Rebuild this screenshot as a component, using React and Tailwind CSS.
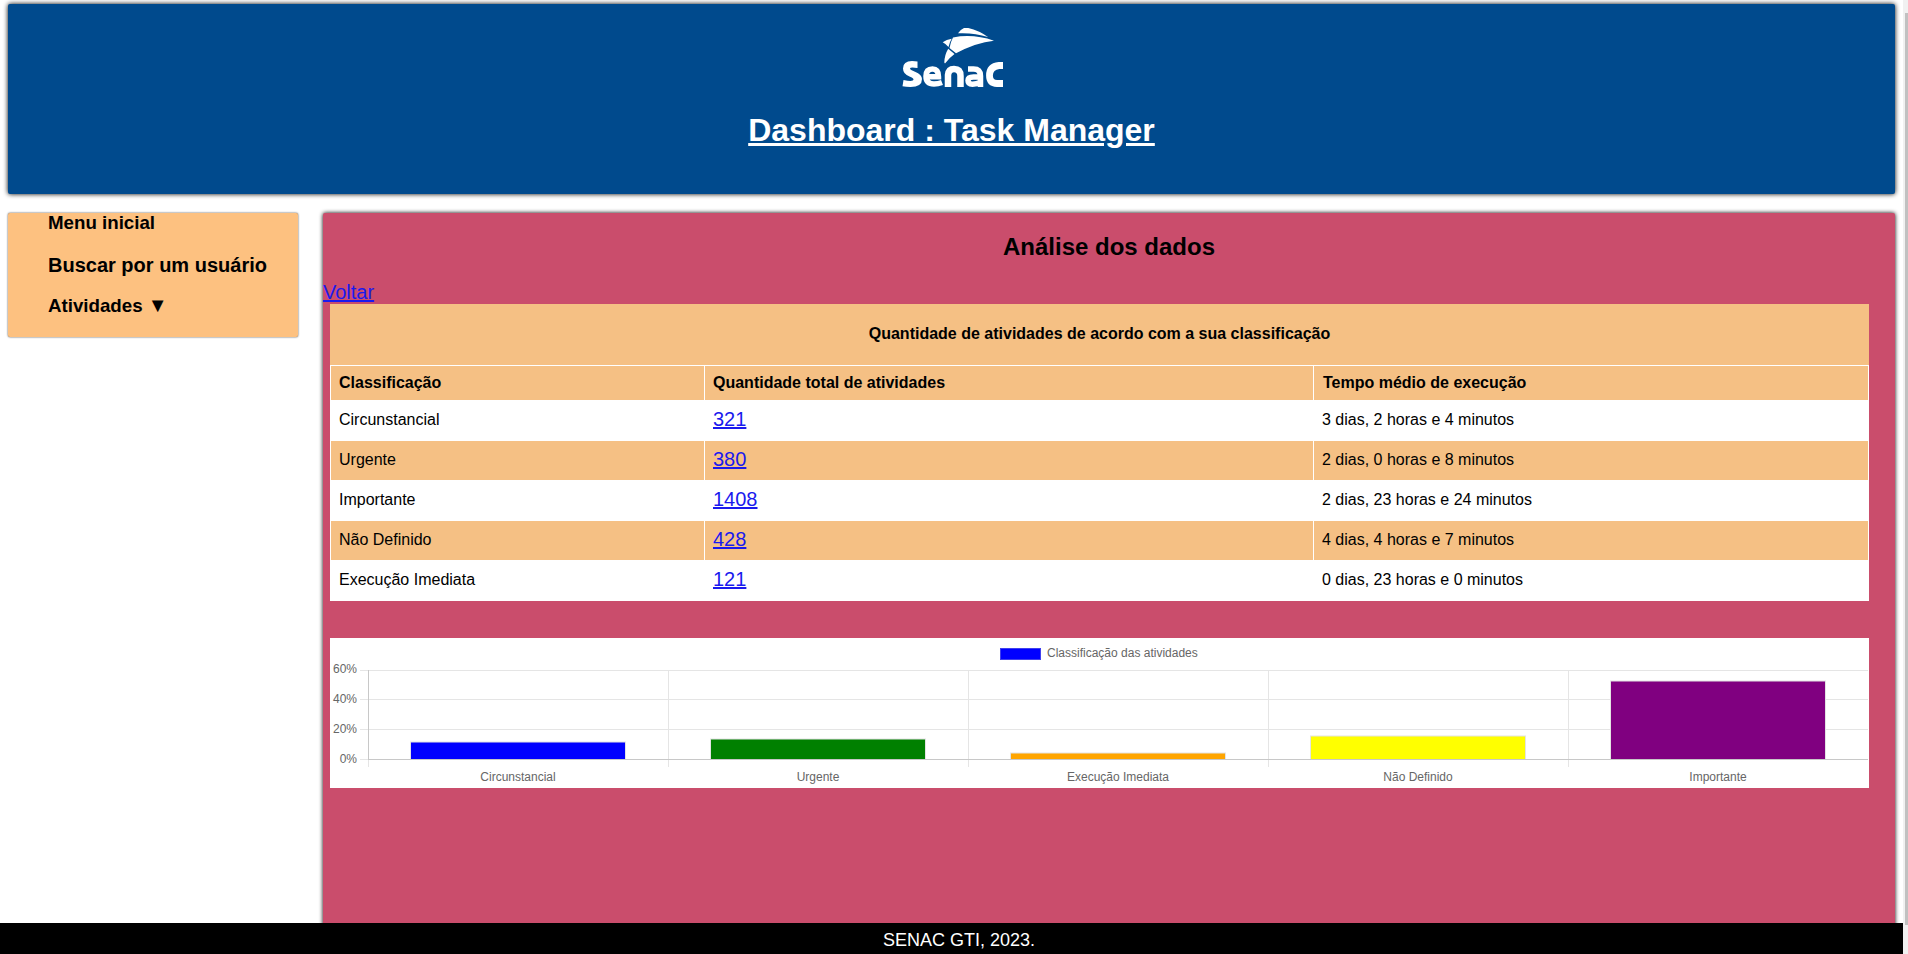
const rows = [
  ["Circunstancial", "321", "3 dias, 2 horas e 4 minutos"],
  ["Urgente", "380", "2 dias, 0 horas e 8 minutos"],
  ["Importante", "1408", "2 dias, 23 horas e 24 minutos"],
  ["Não Definido", "428", "4 dias, 4 horas e 7 minutos"],
  ["Execução Imediata", "121", "0 dias, 23 horas e 0 minutos"],
];

const bars = [
  { label: "Circunstancial", top: 104, fill: "#0000ff" },
  { label: "Urgente", top: 101, fill: "#008000" },
  { label: "Execução Imediata", top: 115, fill: "#ffa500" },
  { label: "Não Definido", top: 98, fill: "#ffff00" },
  { label: "Importante", top: 43, fill: "#800080" },
];

const ticks = [
  ["60%", 32.5],
  ["40%", 61.5],
  ["20%", 91.5],
];

function Logo() {
  return (
    <svg className="ml-[2px] block h-[61px] w-[101px]" viewBox="0 0 101 61" fill="#fff">
      <path d="M56 5.300 Q58.500 1.500 62 0 H66.300 Q77 2.500 86 9 Q72 4.500 56 5.300Z" />
      <path d="M51 9.500 Q71 5.500 92 12.700 Q74 14.500 54 25.300 L47.500 20 Q48.500 14 51 9.500Z" />
      <path d="M40.700 14.300 Q44.500 11.500 49.700 10.700 Q47.500 14 46.500 19 Q44 16 40.700 14.300Z" />
      <path d="M46.200 20.800 L52.500 26 Q47 30 43 35.500 L42.300 34.500 Q42.500 27 46.200 20.800Z" />
      <path d="M15.500 33.500 V40 Q8 38.800 8 40.500 Q8 42 13 43.700 Q20 46.500 20 51 Q20 59 8.500 59 Q4 59 0.500 58.300 L1.500 52 Q11.500 54 11.500 51.500 Q11.500 50 7.500 48.500 Q1 46 1 40.500 Q1 33 10 33 Q13 33 15.500 33.500Z" />
      <g fill="none" stroke="#fff">
        <path d="M24 48.800 H36.500 Q36.500 41 30.500 41 Q24 41 24 48.300 Q24 56 32 56 Q36 56 40 54.500" strokeWidth="5.500" />
        <path d="M46 59 V47 Q46.500 41 52 41 Q58.500 41 58.500 48 V59" strokeWidth="6.500" />
        <path d="M66 41 H71.500 Q78.500 41 78.500 48 V59 M78.500 49 H71.500 Q66 49 66 52.500 Q66 56.200 70.500 56.200 Q75 56.200 78.500 54" strokeWidth="5.500" />
        <path d="M101 37.500 H97 Q87.500 38.500 87.500 47.500 Q87.500 55.300 95 55.500 H101" strokeWidth="6.800" />
      </g>
    </svg>
  );
}

function Chart() {
  return (
    <svg
      className="mt-[37px] ml-[7px] block h-[150px] w-[1539px] bg-white"
      viewBox="0 0 1539 150"
      fontFamily="Liberation Sans, Arial, sans-serif"
      fontSize="12"
    >
      <rect x="670.500" y="10.500" width="40" height="11" fill="#0000ff" stroke="#4040ee" />
      <text x="717" y="19" fill="#666">Classificação das atividades</text>
      <g shapeRendering="crispEdges" stroke="#e5e5e5">
        {ticks.map(([t, y]) => (
          <line key={t} x1="30" x2="1538" y1={y} y2={y} />
        ))}
        {[338.5, 638.5, 938.5, 1238.5].map((x) => (
          <line key={x} x1={x} x2={x} y1="32" y2="129" />
        ))}
        <line x1="38.500" x2="38.500" y1="32" y2="129" />
        <line x1="38.500" x2="38.500" y1="32" y2="121" stroke="#c8c8c8" />
        <line x1="30" x2="38" y1="121.500" y2="121.500" />
      </g>
      {ticks.map(([t, y]) => (
        <text key={t} x="27" y={t === "60%" ? 35 : y + 3.5} textAnchor="end" fill="#666">{t}</text>
      ))}
      <text x="27" y="125" textAnchor="end" fill="#666">0%</text>
      {bars.map((b, i) => (
        <g key={b.label}>
          <rect x={80 + i * 300} y={b.top - 0.5} width="216" height={121.5 - b.top} fill="#e3e3e3" />
          <rect x={81 + i * 300} y={b.top + 0.5} width="214" height={120.5 - b.top} fill={b.fill} />
          <text x={188 + i * 300} y="143" textAnchor="middle" fill="#666">{b.label}</text>
        </g>
      ))}
      <line x1="38" x2="1538" y1="121.500" y2="121.500" stroke="#c8c8c8" shapeRendering="crispEdges" />
    </svg>
  );
}

export default function App() {
  return (
    <div className="flex h-[954px] w-[1908px] overflow-hidden bg-white font-['Liberation_Sans',Arial,sans-serif] text-black">
      <div className="flex w-[1903px] flex-col">
        <div className="flex h-[923px] flex-col overflow-hidden pt-1 pl-2">
          <header className="flex h-[190px] w-[1887px] shrink-0 flex-col items-center rounded-[2px] bg-[#004a8d] pt-[24px] shadow-[0_0_5px_#000]">
            <Logo />
            <h1 className="mt-[23px] text-[32px] leading-[36px] font-bold text-white underline">Dashboard : Task Manager</h1>
          </header>
          <div className="mt-[19px] flex items-start gap-[25px]">
            <nav className="h-[124px] w-[290px] shrink-0 rounded-[2px] bg-[#fdc180] pl-[40px] font-bold shadow-[0_0_2px_#333]">
              <ul className="flex flex-col text-[18.72px] leading-[21px]">
                <li className="h-[41px] leading-[20px]">Menu inicial</li>
                <li className="h-[41px] text-[20px] leading-[22px]">Buscar por um usuário</li>
                <li className="h-[21px]">Atividades <span className="text-[20px] leading-[20px]">▼</span></li>
              </ul>
            </nav>
            <main className="h-[760px] w-[1572px] rounded-[2px] bg-[#ca4d6c] shadow-[0_0_4px_#000]">
              <h2 className="pt-[20px] text-center text-[24px] leading-[28px] font-bold">Análise dos dados</h2>
              <a className="mt-[20px] block h-[23px] w-fit text-[20px] leading-[23px] text-[#1a1aee] underline">Voltar</a>
              <section className="ml-[7px] w-[1539px] bg-white">
                <h3 className="flex h-[61px] items-center justify-center bg-[#f5c084] pb-[2px] text-[16px] font-bold">
                  Quantidade de atividades de acordo com a sua classificação
                </h3>
                <div className="grid grid-cols-[373px_608px_554px] gap-x-px border border-b-0 border-white text-[16px] leading-[34px] font-bold">
                  {["Classificação", "Quantidade total de atividades", "Tempo médio de execução"].map((h) => (
                    <div key={h} className="h-[34px] bg-[#f5c084] pl-[8px] last:pl-[9px]">{h}</div>
                  ))}
                </div>
                {rows.map(([name, count, time], i) => (
                  <div
                    key={name}
                    className={
                      "grid grid-cols-[373px_608px_554px] gap-x-px border-x border-white text-[16px] " +
                      (i % 2 ? "h-[39px] leading-[37px] *:bg-[#f5c084]" : "h-[41px] leading-[39px]")
                    }
                  >
                    <div className="pl-[8px]">{name}</div>
                    <div className="pl-[8px]">
                      <a className="text-[20px] text-[#1a1aee] underline">{count}</a>
                    </div>
                    <div className="pl-[8px]">{time}</div>
                  </div>
                ))}
              </section>
              <Chart />
            </main>
          </div>
        </div>
        <footer className="flex h-[31px] items-center justify-center bg-black pt-[3px] pl-[15px] text-[18px] text-white">SENAC GTI, 2023.</footer>
      </div>
      <div className="w-[5px] bg-[#f1f1f1] pt-[13px] pl-[2px]">
        <div className="h-[912px] bg-[#c1c1c1]" />
      </div>
    </div>
  );
}
